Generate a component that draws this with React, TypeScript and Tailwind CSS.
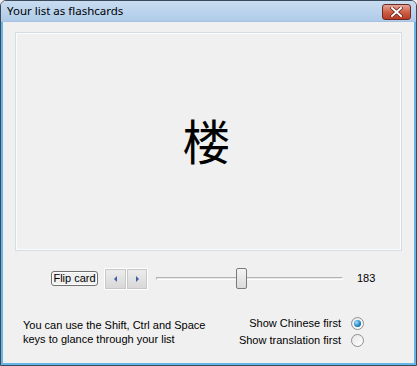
import React from "react";

const font = { fontFamily: '"Liberation Sans", Arial, sans-serif' };

function Radio({ checked }: { checked: boolean }) {
  return (
    <div className="w-[13px] h-[13px] rounded-full border border-[#8f8f8f] bg-gradient-to-br from-[#e6e6e6] to-[#ffffff] flex items-center justify-center">
      {checked && (
        <div className="w-[7px] h-[7px] rounded-full bg-[radial-gradient(circle_at_35%_35%,#9fe0ff,#1d7fc0_60%,#0b4f88)]" />
      )}
    </div>
  );
}

export default function App() {
  return (
    <div className="w-[417px] h-[366px] bg-[#f0f0f0] overflow-hidden" style={font}>
      <div className="w-full h-full border border-[#3b4b5d] rounded-t-[6px] flex flex-col">
        {/* title bar */}
        <div className="h-[21px] flex items-center justify-between pl-[6px] pr-[5px] bg-gradient-to-b from-[#c9dcf0] to-[#afcbe9] rounded-t-[5px] border-b border-[#a6c2e0]">
          <span className="text-[11.5px] text-black leading-none" style={{ fontFamily: '"Noto Sans", sans-serif' }}>
            Your list as flashcards
          </span>
          <div className="w-[29px] h-[16px] mt-[2px] rounded-[3px] border border-[#6b2a24] bg-gradient-to-b from-[#e3a497] via-[#cf5f47] to-[#b93a24] flex items-center justify-center">
            <svg width="13" height="10" viewBox="0 0 13 10">
              <path d="M2 1 L11 9 M11 1 L2 9" stroke="#5a1d14" strokeWidth="3.4" strokeLinecap="square" />
              <path d="M2 1 L11 9 M11 1 L2 9" stroke="#ffffff" strokeWidth="2" strokeLinecap="square" />
            </svg>
          </div>
        </div>
        {/* body */}
        <div className="flex-1 flex flex-col border-l-2 border-r-2 border-b-2 border-[#63b6e6] px-[12px]">
          <div className="mt-[10px] h-[219px] border border-[#d2dde6] flex items-center justify-center bg-[#f0f0f0]">
            <div className="w-full h-full border border-[#fbfbfb] flex items-center justify-center">
              <span
                className="text-[48px] leading-none text-black -mt-[6px] -ml-[4px]"
                style={{ fontFamily: '"Noto Sans CJK SC", sans-serif' }}
              >
                楼
              </span>
            </div>
          </div>
          {/* controls row */}
          <div className="mt-[17px] h-[21px] flex items-center pl-[36px]">
            <button className="w-[47px] h-[15px] rounded-[3px] border border-[#707070] bg-[#f0f0f0] text-[11px] leading-none text-black flex items-center justify-center shadow-[inset_0_0_0_1px_#ffffff]">
              Flip card
            </button>
            <div className="ml-[6px] flex border border-[#ffffff] bg-[#ffffff]">
              <div className="w-[21px] h-[20px] bg-gradient-to-b from-[#ececec] to-[#d8d8d8] border border-[#c8c8c8] flex items-center justify-center">
                <svg width="4" height="6" viewBox="0 0 4 6"><path d="M3 0 L0 3 L3 6 Z" fill="#3c5fa5" /></svg>
              </div>
              <div className="w-[20px] h-[20px] ml-[1px] bg-gradient-to-b from-[#ececec] to-[#d8d8d8] border border-[#c8c8c8] flex items-center justify-center">
                <svg width="4" height="6" viewBox="0 0 4 6"><path d="M1 0 L4 3 L1 6 Z" fill="#3c5fa5" /></svg>
              </div>
            </div>
            <div className="ml-[8px] w-[187px] h-[21px] relative flex items-center">
              <div className="w-full h-[3px] border border-[#b4b4b4] border-b-[#ffffff] border-r-[#ffffff] bg-[#e7e7e7]" />
              <div className="absolute left-[80px] top-0 w-[11px] h-[21px] rounded-[2px] border border-[#7a7a7a] bg-gradient-to-b from-[#f4f4f4] to-[#dadada]" />
            </div>
            <span className="ml-[14px] text-[11px] text-black">183</span>
          </div>
          {/* bottom */}
          <div className="mt-[29px] flex justify-between pl-[8px] pr-[38px]">
            <div className="text-[11px] leading-[14px] text-black">
              <div>You can use the Shift, Ctrl and Space</div>
              <div>keys to glance through your list</div>
            </div>
            <div className="flex flex-col items-end gap-[4px] text-[11px] leading-[13px] text-black -mt-[1px]">
              <div className="flex items-center gap-[10px]">
                <span>Show Chinese first</span>
                <Radio checked />
              </div>
              <div className="flex items-center gap-[10px]">
                <span>Show translation first</span>
                <Radio checked={false} />
              </div>
            </div>
          </div>
        </div>
      </div>
    </div>
  );
}
